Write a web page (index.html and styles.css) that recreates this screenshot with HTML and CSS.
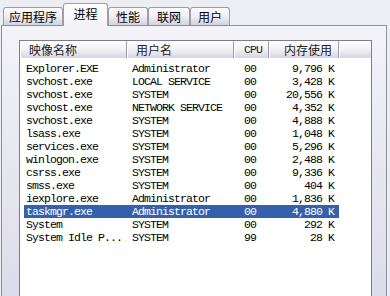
FILE: index.html
```html
<!DOCTYPE html>
<html lang="zh-CN">
<head>
    <meta charset="UTF-8">
    <title>Windows 任务管理器 - 进程</title>
    <link rel="stylesheet" href="styles.css">
</head>
<body>

    <div class="tabs">
        <div class="tab tab-apps">应用程序</div>
        <div class="tab tab-active">进程</div>
        <div class="tab tab-perf">性能</div>
        <div class="tab tab-net">联网</div>
        <div class="tab tab-users">用户</div>
    </div>

    <div class="panel">
        <div class="listbox">
            <div class="list-header">
                <div class="hcell h-name">映像名称</div>
                <div class="hcell h-user">用户名</div>
                <div class="hcell h-cpu">CPU</div>
                <div class="hcell h-mem">内存使用</div>
                <div class="hcell h-rest"></div>
            </div>

            <div class="list-body">
                <div class="row"><span class="c-name">Explorer.EXE</span><span class="c-user">Administrator</span><span class="c-cpu">00</span><span class="c-mem">9,796 K</span></div>
                <div class="row"><span class="c-name">svchost.exe</span><span class="c-user">LOCAL SERVICE</span><span class="c-cpu">00</span><span class="c-mem">3,428 K</span></div>
                <div class="row"><span class="c-name">svchost.exe</span><span class="c-user">SYSTEM</span><span class="c-cpu">00</span><span class="c-mem">20,556 K</span></div>
                <div class="row"><span class="c-name">svchost.exe</span><span class="c-user">NETWORK SERVICE</span><span class="c-cpu">00</span><span class="c-mem">4,352 K</span></div>
                <div class="row"><span class="c-name">svchost.exe</span><span class="c-user">SYSTEM</span><span class="c-cpu">00</span><span class="c-mem">4,888 K</span></div>
                <div class="row"><span class="c-name">lsass.exe</span><span class="c-user">SYSTEM</span><span class="c-cpu">00</span><span class="c-mem">1,048 K</span></div>
                <div class="row"><span class="c-name">services.exe</span><span class="c-user">SYSTEM</span><span class="c-cpu">00</span><span class="c-mem">5,296 K</span></div>
                <div class="row"><span class="c-name">winlogon.exe</span><span class="c-user">SYSTEM</span><span class="c-cpu">00</span><span class="c-mem">2,488 K</span></div>
                <div class="row"><span class="c-name">csrss.exe</span><span class="c-user">SYSTEM</span><span class="c-cpu">00</span><span class="c-mem">9,336 K</span></div>
                <div class="row"><span class="c-name">smss.exe</span><span class="c-user">SYSTEM</span><span class="c-cpu">00</span><span class="c-mem">404 K</span></div>
                <div class="row"><span class="c-name">iexplore.exe</span><span class="c-user">Administrator</span><span class="c-cpu">00</span><span class="c-mem">1,836 K</span></div>
                <div class="row selected"><span class="c-name">taskmgr.exe</span><span class="c-user">Administrator</span><span class="c-cpu">00</span><span class="c-mem">4,880 K</span></div>
                <div class="row"><span class="c-name">System</span><span class="c-user">SYSTEM</span><span class="c-cpu">00</span><span class="c-mem">292 K</span></div>
                <div class="row"><span class="c-name">System Idle P...</span><span class="c-user">SYSTEM</span><span class="c-cpu">99</span><span class="c-mem">28 K</span></div>
            </div>
        </div>
    </div>

</body>
</html>
```

FILE: styles.css
```css
* {
    box-sizing: border-box;
}
body {
    margin: 0;
    height: 296px;
    overflow: hidden;
    background-color: #ededf4;
    font-family: "Noto Sans CJK SC", sans-serif;
    font-size: 12px;
    color: #000;
}

/* --- Tab strip --- */
.tabs {
    display: flex;
    align-items: flex-end;
    height: 25px;
    padding-left: 3px;
}
.tab {
    height: 18px;
    line-height: 18px;
    text-align: center;
    border: 1px solid #9c9cab;
    border-bottom: none;
    border-radius: 3px 3px 0 0;
    background: linear-gradient(#fdfdfe, #eeeef4 50%, #d3d2de);
}
.tab-apps { width: 60px; }
.tab-perf { width: 40px; }
.tab-net { width: 42px; }
.tab-users { width: 40px; }
.tab-active {
    width: 45px;
    height: 23px;
    line-height: 19px;
    margin-bottom: -1px;
    position: relative; /* sits over the panel border */
    z-index: 1;
    background: linear-gradient(#fefefe, #f4f4f8);
}

/* --- Tab page --- */
.panel {
    margin: 0 3px 0 1px;
    height: 271px;
    padding: 14px 14px 0 17px;
    border: 1px solid #8e8e9c;
    border-bottom: none;
    background: linear-gradient(#f3f3f8, #dddcea);
}

/* --- Process list --- */
.listbox {
    height: 100%;
    background-color: #fff;
    border: 1px solid #7c7c8a;
    border-bottom: none;
}
.list-header {
    display: grid;
    grid-template-columns: 107px 107px 35px 70px 1fr;
    height: 17px;
    background: linear-gradient(#ffffff, #f2f2f6 50%, #d6d5e0);
}
.hcell {
    line-height: 17px;
    color: #222;
    border-right: 1px solid #9d9cad;
    box-shadow: inset 1px 0 0 #fff;
    white-space: nowrap;
}
.h-name { padding-left: 9px; }
.h-user { padding-left: 9px; }
.h-cpu {
    padding-left: 10px;
    font-family: "Liberation Mono", monospace;
    font-size: 11.5px;
    letter-spacing: -0.9px;
}
.h-mem {
    text-align: right;
    padding-right: 6px;
}
.h-rest { border-right: none; }

.list-body {
    padding-top: 4px;
}
.row {
    display: grid;
    grid-template-columns: 103px 107px 35px 70px;
    width: 315px;
    height: 13px;
    margin-left: 4px;
    line-height: 13px;
    font-family: "Liberation Mono", monospace;
    font-size: 11.5px;
    letter-spacing: -0.9px;
    white-space: nowrap;
}
.row.selected {
    background-color: #3560ac;
    color: #fff;
}
.c-name { padding-left: 2px; }
.c-user { padding-left: 5px; }
.c-cpu { padding-left: 10px; }
.c-mem {
    text-align: right;
    padding-right: 5px;
}
```
